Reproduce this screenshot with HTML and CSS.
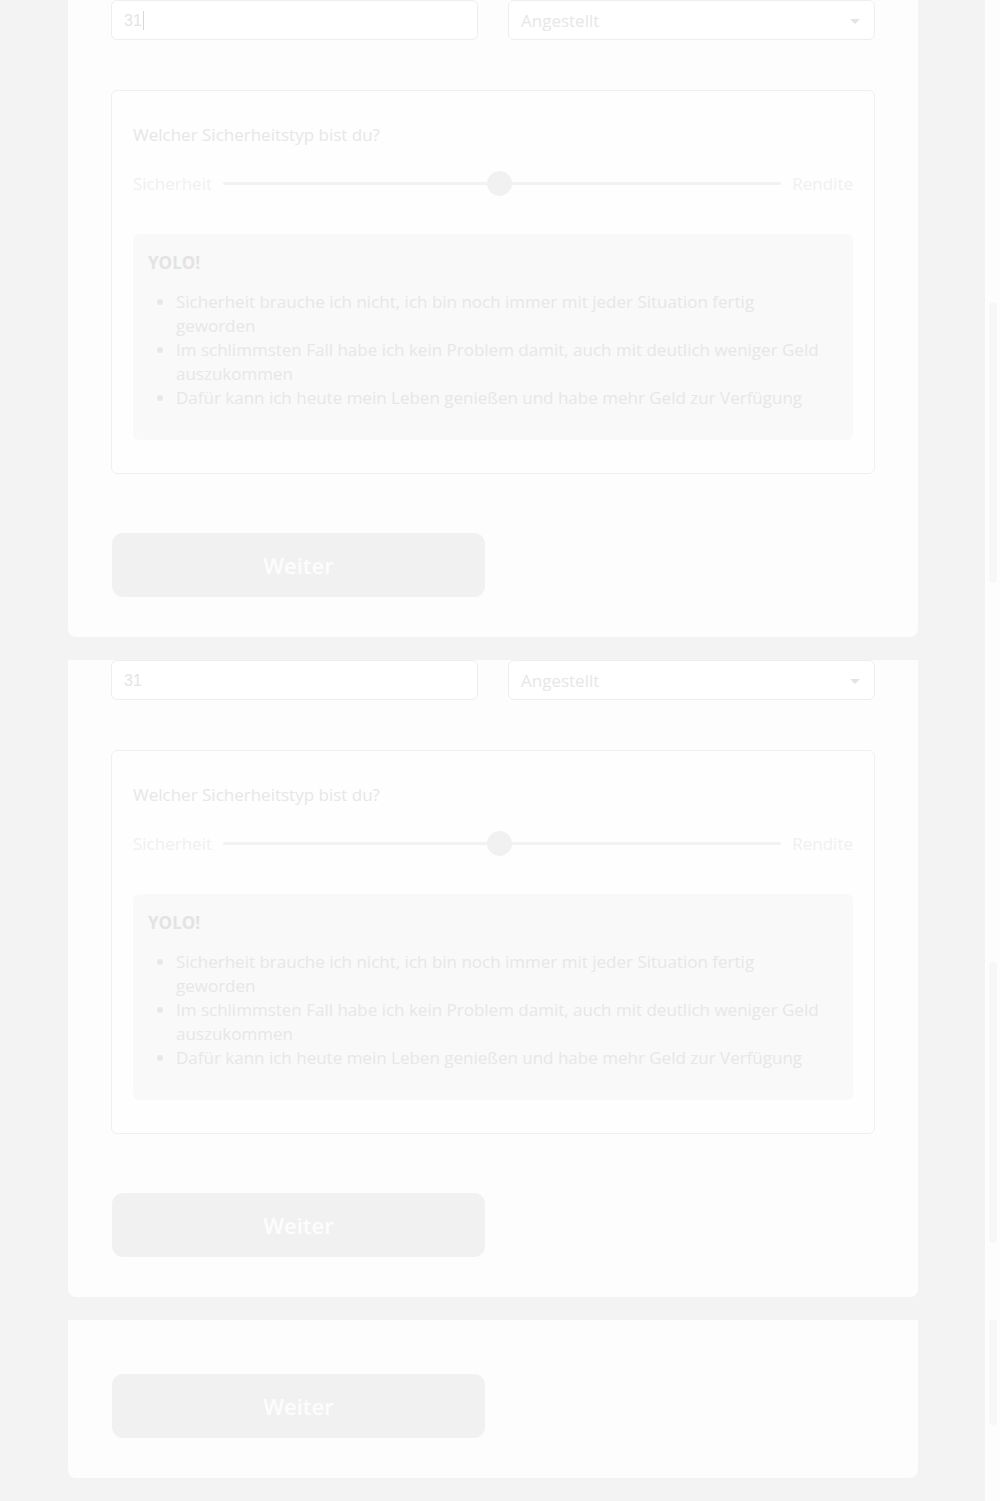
FILE: index.html
```html
<!DOCTYPE html>
<html lang="de">
<head>
<meta charset="utf-8">
<title>Sicherheitstyp</title>
<link rel="stylesheet" href="styles.css">
</head>
<body>
<div class="page">
  <main class="main">
    <section class="card">
      <div class="fields">
        <div class="field"><span class="field-value num">31</span><span class="caret"></span></div>
        <div class="field select"><span class="field-value">Angestellt</span><span class="arrow"></span></div>
      </div>
      <div class="box">
        <div class="question">Welcher Sicherheitstyp bist du?</div>
        <div class="slider">
          <span class="slider-label">Sicherheit</span>
          <div class="track"><span class="knob"></span></div>
          <span class="slider-label">Rendite</span>
        </div>
        <div class="yolo">
          <div class="yolo-title">YOLO!</div>
          <ul>
            <li>Sicherheit brauche ich nicht, ich bin noch immer mit jeder Situation fertig geworden</li>
            <li>Im schlimmsten Fall habe ich kein Problem damit, auch mit deutlich weniger Geld auszukommen</li>
            <li>Dafür kann ich heute mein Leben genießen und habe mehr Geld zur Verfügung</li>
          </ul>
        </div>
      </div>
      <div class="btn">Weiter</div>
    </section>

    <section class="card">
      <div class="fields">
        <div class="field"><span class="field-value num">31</span></div>
        <div class="field select"><span class="field-value">Angestellt</span><span class="arrow"></span></div>
      </div>
      <div class="box">
        <div class="question">Welcher Sicherheitstyp bist du?</div>
        <div class="slider">
          <span class="slider-label">Sicherheit</span>
          <div class="track"><span class="knob"></span></div>
          <span class="slider-label">Rendite</span>
        </div>
        <div class="yolo">
          <div class="yolo-title">YOLO!</div>
          <ul>
            <li>Sicherheit brauche ich nicht, ich bin noch immer mit jeder Situation fertig geworden</li>
            <li>Im schlimmsten Fall habe ich kein Problem damit, auch mit deutlich weniger Geld auszukommen</li>
            <li>Dafür kann ich heute mein Leben genießen und habe mehr Geld zur Verfügung</li>
          </ul>
        </div>
      </div>
      <div class="btn">Weiter</div>
    </section>

    <section class="card short">
      <div class="btn">Weiter</div>
    </section>
  </main>
  <aside class="scrollbar">
    <div class="thumb thumb-1"></div>
    <div class="thumb thumb-2"></div>
    <div class="thumb thumb-3"></div>
  </aside>
</div>
</body>
</html>
```
FILE: styles.css
```css
* { box-sizing: border-box; }
html, body { margin: 0; padding: 0; }
body {
  background: #f3f3f3;
  font-family: "Open Sans", "Noto Sans", sans-serif;
  font-size: 17px;
  line-height: 24px;
}
.page { display: flex; min-height: 1501px; }
.main { width: 985px; flex: none; }
.scrollbar {
  width: 15px;
  flex: none;
  background: #fdfdfd;
  display: flex;
  flex-direction: column;
  align-items: flex-start;
  padding-left: 4px;
}
.thumb { width: 8px; background: #f7f7f7; border-radius: 4px; }
.thumb-1 { margin-top: 302px; height: 281px; }
.thumb-2 { margin-top: 379px; height: 281px; }
.thumb-3 { margin-top: 77px; height: 105px; border-radius: 0 0 4px 4px; }

.card {
  width: 850px;
  margin: 0 0 23px 68px;
  background: #fdfdfd;
  border-radius: 0 0 8px 8px;
  padding: 0 43px 40px;
}
.card.short { padding-top: 54px; }
.card.short .btn { margin-top: 0; }

.fields { display: grid; grid-template-columns: 1fr 1fr; gap: 30px; }
.field {
  height: 40px;
  border: 1px solid #eeeeee;
  border-radius: 6px;
  background: #ffffff;
  padding: 1px 14px 0 12px;
  display: flex;
  align-items: center;
}
.field-value { color: #e7e7e7; font-size: 17px; }
.field-value.num { font-family: "Liberation Sans", Arial, sans-serif; font-size: 16px; color: #e4e4e4; }
.caret { width: 1px; height: 19px; background: #d8d8d8; margin-left: 1px; }
.arrow {
  margin-left: auto;
  margin-top: 2px;
  width: 0; height: 0;
  border-left: 5px solid transparent;
  border-right: 5px solid transparent;
  border-top: 5px solid #e4e4e4;
}

.box {
  margin-top: 50px;
  border: 1px solid #f0f0f0;
  border-radius: 6px;
  background: #fefefe;
  padding: 32px 21px 33px;
}
.question { color: #e7e7e7; }
.slider { margin-top: 24px; height: 25px; display: flex; align-items: center; gap: 11px; }
.slider-label { color: #f0f0f0; }
.track { flex: 1; height: 3px; background: #f2f2f2; border-radius: 2px; position: relative; }
.knob {
  position: absolute;
  left: 49.5%;
  top: 50%;
  width: 25px; height: 25px;
  margin: -12.5px 0 0 -12.5px;
  border-radius: 50%;
  background: #f1f1f1;
}
.yolo {
  margin-top: 38px;
  background: #f9f9f9;
  border-radius: 6px;
  padding: 17px 26px 30px 15px;
}
.yolo-title { font-weight: 700; color: #e3e3e3; }
.yolo ul { margin: 15px 0 0; padding-left: 28px; color: #e7e7e7; }

.btn {
  margin: 59px 0 0 1px;
  width: 373px;
  height: 64px;
  border-radius: 11px;
  background: #f1f1f1;
  display: flex;
  align-items: center;
  justify-content: center;
  color: #fdfdfd;
  font-weight: 600;
  font-size: 22px;
}
```
